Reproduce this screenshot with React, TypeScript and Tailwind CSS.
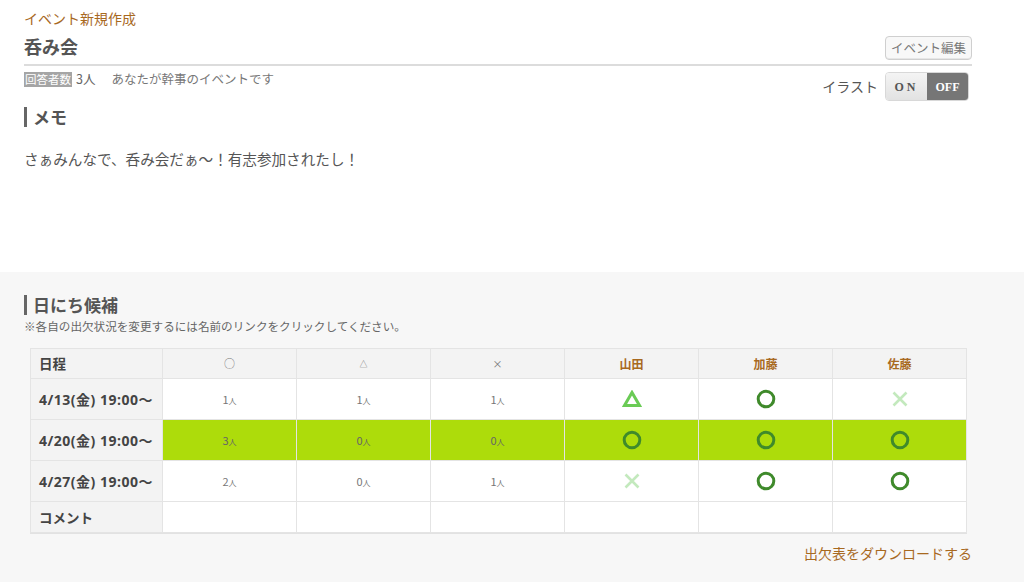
import React from "react";

const brown = "text-[#a8691f]";

function Circle() {
  return (
    <svg width="20" height="20" viewBox="0 0 20 20" className="inline-block">
      <circle cx="10" cy="10" r="7.8" fill="none" stroke="#3f8a2b" strokeWidth="3" />
    </svg>
  );
}
function Tri() {
  return (
    <svg width="20" height="18" viewBox="0 0 20 18" className="inline-block">
      <path d="M10 2.5 L17.5 15.5 L2.5 15.5 Z" fill="none" stroke="#6acb55" strokeWidth="3" strokeLinejoin="miter" />
    </svg>
  );
}
function Cross() {
  return (
    <svg width="20" height="20" viewBox="0 0 20 20" className="inline-block">
      <path d="M3.5 3.5 L16.5 16.5 M16.5 3.5 L3.5 16.5" stroke="#c3e9bd" strokeWidth="2.6" />
    </svg>
  );
}

type Mark = "o" | "t" | "x";
const rows: { date: string; counts: number[]; marks: Mark[]; hl?: boolean }[] = [
  { date: "4/13(金) 19:00〜", counts: [1, 1, 1], marks: ["t", "o", "x"] },
  { date: "4/20(金) 19:00〜", counts: [3, 0, 0], marks: ["o", "o", "o"], hl: true },
  { date: "4/27(金) 19:00〜", counts: [2, 0, 1], marks: ["x", "o", "o"] },
];

function MarkIcon({ m }: { m: Mark }) {
  if (m === "o") return <Circle />;
  if (m === "t") return <Tri />;
  return <Cross />;
}

const dateFont = { fontFamily: '"Open Sans", "Noto Sans CJK JP", sans-serif' };

export default function App() {
  const font = { fontFamily: '"Noto Sans CJK JP", "Noto Sans", sans-serif' };
  return (
    <div className="w-[1024px] h-[582px] overflow-hidden bg-white text-[#555]" style={font}>
      <div className="bg-white h-[272px] px-[24px] pr-[52px]">
        <div className={`pt-[8px] text-[14px] leading-[20px] ${brown}`}>イベント新規作成</div>
        <div className="flex items-end justify-between h-[38px] border-b-2 border-[#dcdcdc] pb-[4px]">
          <div className="text-[18px] font-bold leading-[26px] text-[#555] pb-[1px]">呑み会</div>
          <div className="h-[24px] px-[5px] flex items-center rounded-[4px] border border-[#cfcfcf] bg-[#f8f8f8] text-[12.5px] text-[#777] shadow-[inset_0_-1px_0_#e6e6e6]">
            イベント編集
          </div>
        </div>
        <div className="flex justify-between items-start pt-[5px]">
          <div className="flex items-center text-[12.5px] leading-[16px]">
            <span className="bg-[#a5a5a5] text-white text-[11.5px] px-[1px] leading-[15px]">回答者数</span>
            <span className="ml-[4px] text-[#666]">3人</span>
            <span className="ml-[16px] text-[#777]">あなたが幹事のイベントです</span>
          </div>
          <div className="flex items-center mr-[3px] mt-[1px]">
            <span className="text-[14px] text-[#555] mr-[7px]">イラスト</span>
            <div className="flex h-[29px] rounded-[4px] overflow-hidden border border-[#d8d8d8]">
              <div
                className="w-[41px] flex items-center justify-center bg-gradient-to-b from-[#f4f4f4] to-[#e2e2e2] text-[12px] font-bold text-[#555] tracking-[3px]"
                style={{ fontFamily: '"Liberation Serif", serif' }}
              >
                ON
              </div>
              <div
                className="w-[41px] flex items-center justify-center bg-[#767676] text-[12px] font-bold text-white"
                style={{ fontFamily: '"Liberation Serif", serif' }}
              >
                OFF
              </div>
            </div>
          </div>
        </div>
        <div className="mt-[6px] flex items-center h-[20px]">
          <div className="w-[3px] h-[20px] bg-[#666]" />
          <div className="ml-[6px] text-[17px] font-bold text-[#555] leading-[20px]">メモ</div>
        </div>
        <div className="mt-[22px] text-[14.6px] leading-[20px] text-[#555]">
          さぁみんなで、呑み会だぁ〜！有志参加されたし！
        </div>
      </div>
      <div className="bg-[#f7f7f7] h-[310px] pl-[24px] pr-[52px] pt-[23px]">
        <div className="flex items-center h-[20px]">
          <div className="w-[3px] h-[20px] bg-[#666]" />
          <div className="ml-[6px] text-[17px] font-bold text-[#555] leading-[20px]">日にち候補</div>
        </div>
        <div className="mt-[3px] text-[11.6px] leading-[16px] text-[#666]">
          ※各自の出欠状況を変更するには名前のリンクをクリックしてください。
        </div>
        <div className="px-[6px] mt-[14px]">
          <table className="border-collapse table-fixed w-[936px] shadow-[0_1px_0_#e2e2e2]">
            <colgroup>
              <col className="w-[132px]" />
              <col className="w-[134px]" />
              <col className="w-[134px]" />
              <col className="w-[134px]" />
              <col className="w-[134px]" />
              <col className="w-[134px]" />
              <col className="w-[134px]" />
            </colgroup>
            <thead>
              <tr className="h-[30px] bg-[#f3f3f3]">
                <th className="border border-[#e4e4e4] text-left pl-[8px] text-[13.5px] font-bold text-[#444]">日程</th>
                <th className="border border-[#e4e4e4] text-[11px] font-normal text-[#777]">○</th>
                <th className="border border-[#e4e4e4] text-[8px] font-normal text-[#777]">△</th>
                <th className="border border-[#e4e4e4] text-[10px] font-normal text-[#777]">×</th>
                <th className={`border border-[#e4e4e4] text-[12px] font-bold ${brown}`}>山田</th>
                <th className={`border border-[#e4e4e4] text-[12px] font-bold ${brown}`}>加藤</th>
                <th className={`border border-[#e4e4e4] text-[12px] font-bold ${brown}`}>佐藤</th>
              </tr>
            </thead>
            <tbody>
              {rows.map((r) => (
                <tr key={r.date} className="h-[41px]">
                  <td
                    className="border border-[#e4e4e4] bg-[#f3f3f3] pl-[8px] text-[14px] font-bold text-[#444] tracking-[0.5px] whitespace-nowrap"
                    style={dateFont}
                  >
                    {r.date}
                  </td>
                  {r.counts.map((c, i) => (
                    <td
                      key={i}
                      className={`border border-[#e4e4e4] text-center text-[11px] ${r.hl ? "bg-[#addc0b] text-[#666]" : "bg-white text-[#777]"}`}
                    >
                      {c}
                      <span className="text-[8px]">人</span>
                    </td>
                  ))}
                  {r.marks.map((m, i) => (
                    <td
                      key={i}
                      className={`border border-[#e4e4e4] text-center align-middle leading-[0] ${r.hl ? "bg-[#addc0b]" : "bg-white"}`}
                    >
                      <MarkIcon m={m} />
                    </td>
                  ))}
                </tr>
              ))}
              <tr className="h-[31px]">
                <td className="border border-[#e4e4e4] bg-[#f3f3f3] pl-[8px] text-[13.5px] font-bold text-[#444]">コメント</td>
                {[0, 1, 2, 3, 4, 5].map((i) => (
                  <td key={i} className="border border-[#e4e4e4] bg-white" />
                ))}
              </tr>
            </tbody>
          </table>
        </div>
        <div className={`mt-[10px] text-right text-[14px] leading-[20px] ${brown}`}>出欠表をダウンロードする</div>
      </div>
    </div>
  );
}
